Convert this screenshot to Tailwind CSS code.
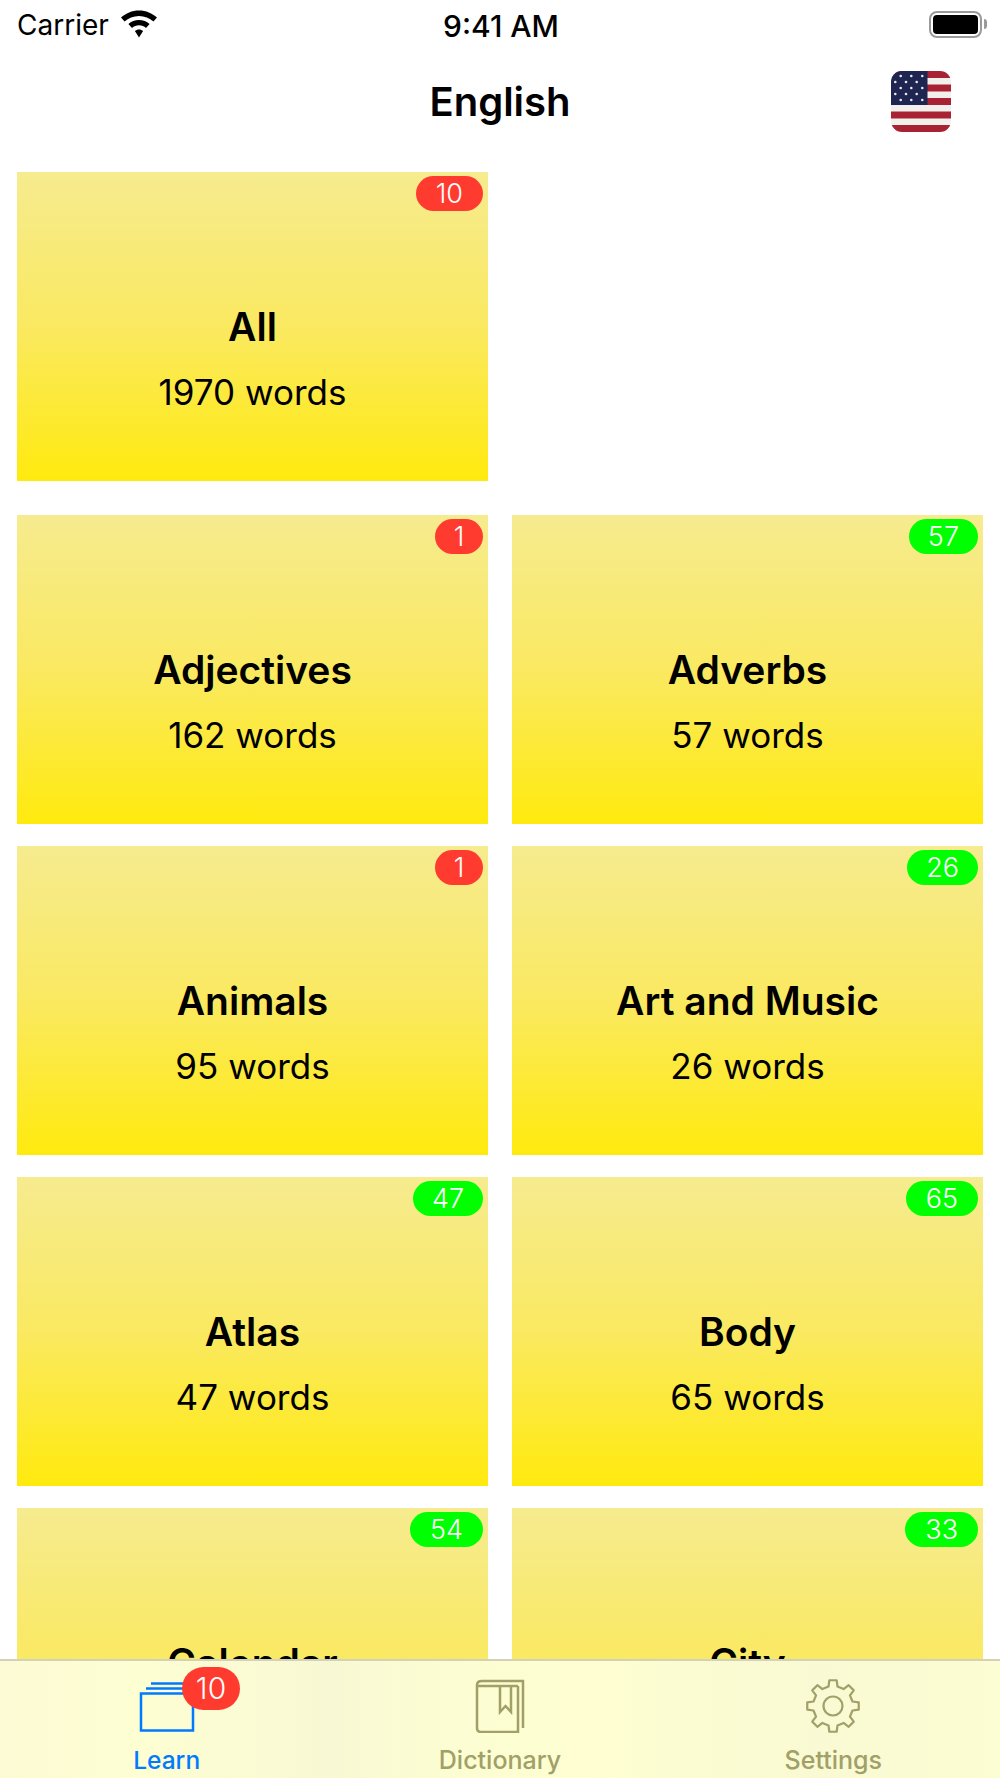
<!DOCTYPE html>
<html lang="en">
<head>
  <meta charset="UTF-8" />
  <meta name="viewport" content="width=device-width, initial-scale=1.0"/>
  <title>English</title>
  <script src="https://cdn.jsdelivr.net/npm/@tailwindcss/browser@4"></script>
</head>
<body class="bg-white font-['Inter',sans-serif] text-black">
  <div class="relative w-[1000px] h-[1778px] overflow-hidden bg-white">

    <!-- status bar -->
    <div class="relative flex h-[48px] items-center justify-between pl-[17px] pr-[13px]">
      <div class="flex items-center gap-[11px]">
        <span class="pt-[2px] text-[28px] leading-[48px]">Carrier</span>
        <svg width="38" height="28" viewBox="0 0 38 28"><path d="M19 0.5C12 0.5 5.8 3.2 1 7.6L4.6 11.4C8.4 8 13.4 5.9 19 5.9S29.6 8 33.4 11.4L37 7.6C32.2 3.2 26 0.5 19 0.5ZM19 10C15 10 11.2 11.5 8.4 14.1L12 17.9C13.9 16.2 16.3 15.3 19 15.3S24.1 16.2 26 17.9L29.6 14.1C26.8 11.5 23 10 19 10ZM19 19.5C17.4 19.5 16 20.1 14.9 21.1L19 27.5L23.1 21.1C22 20.1 20.6 19.5 19 19.5Z" fill="#000"/></svg>
      </div>
      <span class="absolute left-[443px] top-[2px] text-[30px] font-medium leading-[48px]">9:41 AM</span>
      <div class="flex items-center gap-[2px]">
        <div class="h-[27px] w-[53px] rounded-[8px] border-[2.5px] border-[#9a9a9a] p-[2px]">
          <div class="h-full w-full rounded-[4px] bg-black"></div>
        </div>
        <div class="h-[10px] w-[3px] rounded-r-full bg-[#9a9a9a]"></div>
      </div>
    </div>

    <!-- nav bar -->
    <div class="relative flex h-[106px] items-center justify-center">
      <h1 class="pt-[2px] text-[40px] font-semibold">English</h1>
      <svg class="absolute left-[891px] top-[23px]" width="60" height="61" viewBox="0 0 60 61">
        <defs><clipPath id="flagClip"><rect width="60" height="61" rx="11"/></clipPath></defs>
        <g clip-path="url(#flagClip)">
          <rect width="60" height="61" fill="#f1f0ec"/>
          <rect y="0" width="60" height="7" fill="#a82234"/>
          <rect y="13.5" width="60" height="7" fill="#a82234"/>
          <rect y="27" width="60" height="7" fill="#a82234"/>
          <rect y="40.5" width="60" height="7" fill="#a82234"/>
          <rect y="54" width="60" height="7" fill="#a82234"/>
          <rect width="36.5" height="34" fill="#1d2550"/>
          <g fill="#e8e8ee">
            <circle cx="9.7" cy="5" r="1.3"/><circle cx="20.3" cy="5" r="1.3"/><circle cx="31.3" cy="5" r="1.3"/>
            <circle cx="4.3" cy="11" r="1.3"/><circle cx="15" cy="11" r="1.3"/><circle cx="25.7" cy="11" r="1.3"/>
            <circle cx="9.7" cy="17" r="1.3"/><circle cx="20.3" cy="17" r="1.3"/><circle cx="31.3" cy="17" r="1.3"/>
            <circle cx="4.3" cy="23" r="1.3"/><circle cx="15" cy="23" r="1.3"/><circle cx="25.7" cy="23" r="1.3"/>
            <circle cx="9.7" cy="29" r="1.3"/><circle cx="20.3" cy="29" r="1.3"/><circle cx="31.3" cy="29" r="1.3"/>
          </g>
        </g>
      </svg>
    </div>

    <!-- category grid -->
    <div class="px-[17px] pt-[18px]">
      <div class="grid grid-cols-2 gap-x-[24px] mb-[34px]">
        <a class="relative flex h-[309px] flex-col items-center bg-linear-to-b/srgb from-[#f6eb8f] via-[#fae961] to-[#ffea0e] pt-[130px]">
          <span class="absolute right-[5px] top-[4px] flex h-[35px] min-w-[48px] items-center justify-center rounded-full bg-[#ff3b30] px-[20px] pt-[1px] text-[27px] font-light text-white">10</span>
          <span class="text-[39px] leading-[50px] font-semibold">All</span>
          <span class="mt-[15px] text-[35px] leading-[50px]">1970 words</span>
        </a>
      </div>

      <div class="grid grid-cols-2 gap-x-[24px] gap-y-[22px]">
        <a class="relative flex h-[309px] flex-col items-center bg-linear-to-b/srgb from-[#f6eb8f] via-[#fae961] to-[#ffea0e] pt-[130px]">
          <span class="absolute right-[5px] top-[4px] flex h-[35px] min-w-[48px] items-center justify-center rounded-full bg-[#ff3b30] px-[9px] pt-[1px] text-[27px] font-light text-white">1</span>
          <span class="text-[39px] leading-[50px] font-semibold">Adjectives</span>
          <span class="mt-[15px] text-[35px] leading-[50px]">162 words</span>
        </a>
        <a class="relative flex h-[309px] flex-col items-center bg-linear-to-b/srgb from-[#f6eb8f] via-[#fae961] to-[#ffea0e] pt-[130px]">
          <span class="absolute right-[5px] top-[4px] flex h-[35px] min-w-[48px] items-center justify-center rounded-full bg-[#00ff00] px-[19px] pt-[1px] text-[27px] font-light text-white">57</span>
          <span class="text-[39px] leading-[50px] font-semibold">Adverbs</span>
          <span class="mt-[15px] text-[35px] leading-[50px]">57 words</span>
        </a>
        <a class="relative flex h-[309px] flex-col items-center bg-linear-to-b/srgb from-[#f6eb8f] via-[#fae961] to-[#ffea0e] pt-[130px]">
          <span class="absolute right-[5px] top-[4px] flex h-[35px] min-w-[48px] items-center justify-center rounded-full bg-[#ff3b30] px-[9px] pt-[1px] text-[27px] font-light text-white">1</span>
          <span class="text-[39px] leading-[50px] font-semibold">Animals</span>
          <span class="mt-[15px] text-[35px] leading-[50px]">95 words</span>
        </a>
        <a class="relative flex h-[309px] flex-col items-center bg-linear-to-b/srgb from-[#f6eb8f] via-[#fae961] to-[#ffea0e] pt-[130px]">
          <span class="absolute right-[5px] top-[4px] flex h-[35px] min-w-[48px] items-center justify-center rounded-full bg-[#00ff00] px-[19px] pt-[1px] text-[27px] font-light text-white">26</span>
          <span class="text-[39px] leading-[50px] font-semibold">Art and Music</span>
          <span class="mt-[15px] text-[35px] leading-[50px]">26 words</span>
        </a>
        <a class="relative flex h-[309px] flex-col items-center bg-linear-to-b/srgb from-[#f6eb8f] via-[#fae961] to-[#ffea0e] pt-[130px]">
          <span class="absolute right-[5px] top-[4px] flex h-[35px] min-w-[48px] items-center justify-center rounded-full bg-[#00ff00] px-[19px] pt-[1px] text-[27px] font-light text-white">47</span>
          <span class="text-[39px] leading-[50px] font-semibold">Atlas</span>
          <span class="mt-[15px] text-[35px] leading-[50px]">47 words</span>
        </a>
        <a class="relative flex h-[309px] flex-col items-center bg-linear-to-b/srgb from-[#f6eb8f] via-[#fae961] to-[#ffea0e] pt-[130px]">
          <span class="absolute right-[5px] top-[4px] flex h-[35px] min-w-[48px] items-center justify-center rounded-full bg-[#00ff00] px-[20px] pt-[1px] text-[27px] font-light text-white">65</span>
          <span class="text-[39px] leading-[50px] font-semibold">Body</span>
          <span class="mt-[15px] text-[35px] leading-[50px]">65 words</span>
        </a>
        <a class="relative flex h-[309px] flex-col items-center bg-linear-to-b/srgb from-[#f6eb8f] via-[#fae961] to-[#ffea0e] pt-[130px]">
          <span class="absolute right-[5px] top-[4px] flex h-[35px] min-w-[48px] items-center justify-center rounded-full bg-[#00ff00] px-[20px] pt-[1px] text-[27px] font-light text-white">54</span>
          <span class="text-[39px] leading-[50px] font-semibold">Calendar</span>
        </a>
        <a class="relative flex h-[309px] flex-col items-center bg-linear-to-b/srgb from-[#f6eb8f] via-[#fae961] to-[#ffea0e] pt-[130px]">
          <span class="absolute right-[5px] top-[4px] flex h-[35px] min-w-[48px] items-center justify-center rounded-full bg-[#00ff00] px-[20px] pt-[1px] text-[27px] font-light text-white">33</span>
          <span class="text-[39px] leading-[50px] font-semibold">City</span>
        </a>
      </div>
    </div>

    <!-- tab bar -->
    <div class="absolute bottom-0 left-0 grid h-[119px] w-full grid-cols-3 border-t-2 border-[#d2d2b8] bg-[linear-gradient(90deg,#fcfbd5_0%,#fefed3_14%,#f8f8d4_33%,#fdfdd3_45%,#fefed2_60%,#f9f9d3_82%,#fdfdd3_100%)]">
      <div class="relative flex flex-col items-center pt-[21px]">
        <svg width="56" height="50" viewBox="0 0 56 50" fill="none" stroke="#007aff" stroke-width="2.5">
          <path d="M12 1.5H54M7 6.5H54"/>
          <rect x="2" y="11.5" width="52" height="37"/>
        </svg>
        <span class="absolute left-[182px] top-[6px] flex h-[43px] w-[58px] items-center justify-center rounded-full bg-[#ff3b30] text-[30px] font-light text-white">10</span>
        <span class="mt-[13px] text-[24.5px] font-medium leading-[30px] text-[#007aff]">Learn</span>
      </div>
      <div class="flex flex-col items-center pt-[18px]">
        <svg width="50" height="54" viewBox="0 0 50 54" fill="none" stroke="#a0a068" stroke-width="2.5">
          <path d="M7 2H48V49M43 7V53H6C3.5 53 2 51.5 2 49V6C2 3.5 4 2 7 2M2 7H43M25 7V33L30.5 27L36 33V7"/>
        </svg>
        <span class="mt-[12px] text-[25px] font-medium leading-[30px] text-[#a0a068]">Dictionary</span>
      </div>
      <div class="flex flex-col items-center pt-[18px]">
        <svg width="54" height="54" viewBox="0 0 54 54" fill="none" stroke="#a0a068" stroke-width="2.2" stroke-linejoin="round">
          <path d="M22.5 7.51L23.38 1.25H30.62L31.5 7.51L37.6 10.04L42.65 6.24L47.76 11.35L43.96 16.4L46.49 22.5L52.75 23.38V30.62L46.49 31.5L43.96 37.6L47.76 42.65L42.65 47.76L37.6 43.96L31.5 46.49L30.62 52.75H23.38L22.5 46.49L16.4 43.96L11.35 47.76L6.24 42.65L10.04 37.6L7.51 31.5L1.25 30.62V23.38L7.51 22.5L10.04 16.4L6.24 11.35L11.35 6.24L16.4 10.04Z"/>
          <circle cx="27" cy="27" r="9.5"/>
        </svg>
        <span class="mt-[12px] text-[25px] font-medium leading-[30px] text-[#a0a068]">Settings</span>
      </div>
    </div>
  </div>
</body>
</html>
